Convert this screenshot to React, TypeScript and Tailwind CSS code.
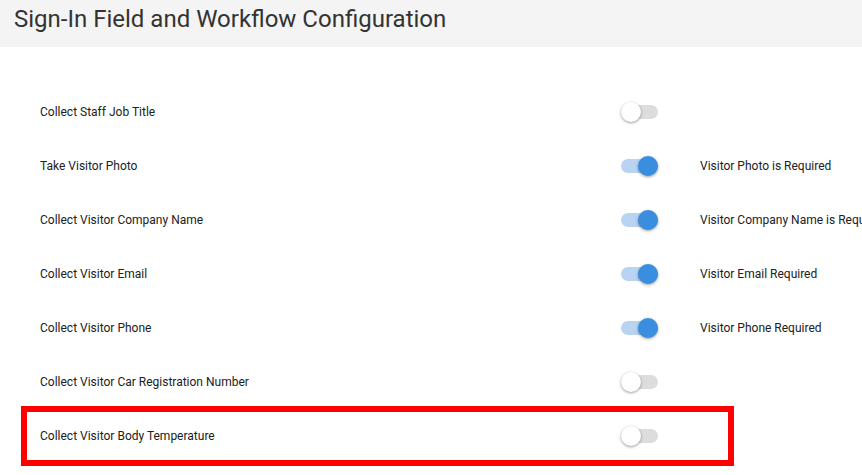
import React from 'react';

interface FieldRow {
  label: string;
  on: boolean;
  note?: string;
}

const rows: FieldRow[] = [
  { label: 'Collect Staff Job Title', on: false },
  { label: 'Take Visitor Photo', on: true, note: 'Visitor Photo is Required' },
  { label: 'Collect Visitor Company Name', on: true, note: 'Visitor Company Name is Required' },
  { label: 'Collect Visitor Email', on: true, note: 'Visitor Email Required' },
  { label: 'Collect Visitor Phone', on: true, note: 'Visitor Phone Required' },
  { label: 'Collect Visitor Car Registration Number', on: false },
];

function Toggle({ on }: { on: boolean }) {
  return (
    <div className="relative shrink-0 w-[37px] h-[20px] flex items-center">
      <div className={`w-full h-[14px] rounded-full ${on ? 'bg-[#b9d3f3]' : 'bg-[#dddddd]'}`} />
      <div
        className={`absolute top-0 w-[20px] h-[20px] rounded-full shadow-[0_1px_3px_rgba(0,0,0,0.4)] ${
          on ? 'left-[17px] bg-[#3a8ee0]' : 'left-0 bg-white'
        }`}
      />
    </div>
  );
}

export default function App() {
  return (
    <div className="w-[862px] h-[475px] overflow-hidden bg-white font-['Roboto',sans-serif]">
      {/* Header */}
      <header className="h-[47px] bg-[#f4f4f4] pl-[14px] flex items-center">
        <h1 className="text-[24px] text-[#333333] leading-none -mt-[9px] whitespace-nowrap">
          Sign-In Field and Workflow Configuration
        </h1>
      </header>

      <div className="pt-[38px]">
        {rows.map((row) => (
          <div key={row.label} className="h-[54px] flex items-center pl-[40px]">
            <div className="w-[581px] shrink-0 text-[12px] text-[#212121]">{row.label}</div>
            <Toggle on={row.on} />
            {row.note && (
              <div className="ml-[42px] shrink-0 text-[12px] text-[#212121] whitespace-nowrap">{row.note}</div>
            )}
          </div>
        ))}

        <div className="ml-[21px] -mt-[3px] w-[713px] h-[60px] border-[6px] border-[#ff0000] flex items-center pl-[13px]">
          <div className="w-[581px] shrink-0 text-[12px] text-[#212121]">Collect Visitor Body Temperature</div>
          <Toggle on={false} />
        </div>
      </div>
    </div>
  );
}
